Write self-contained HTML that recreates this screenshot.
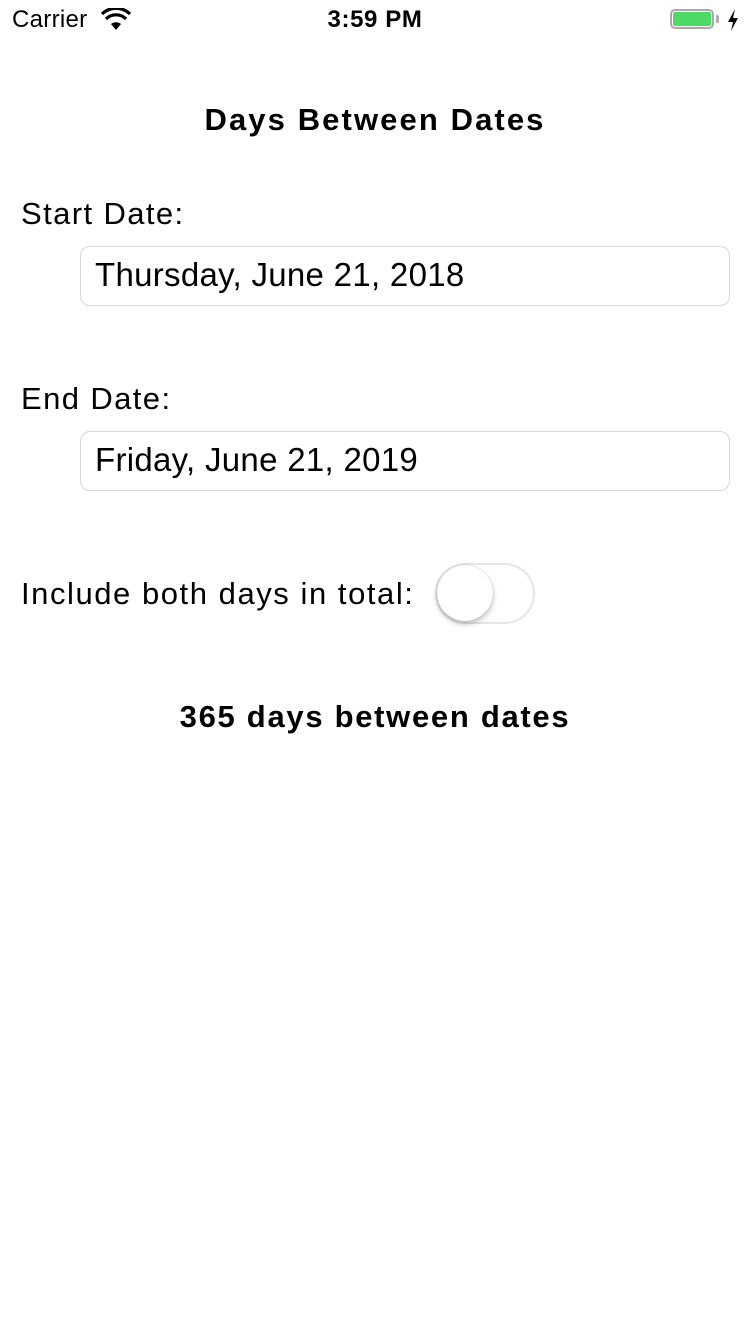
<!DOCTYPE html>
<html><head><meta charset="utf-8"><style>
body{margin:0;width:750px;height:1334px;background:#fff;font-family:"Liberation Sans",sans-serif;color:#000;position:relative;overflow:hidden}
.a{position:absolute;white-space:nowrap}
.box{position:absolute;left:80px;width:648px;height:58px;border:1px solid #d6d6d6;border-radius:10px}
.box span{position:absolute;left:14px;top:9px;font-size:33px;letter-spacing:0.3px}
</style></head><body>
<div class="a" style="left:12px;top:6px;font-size:24px;letter-spacing:0.3px">Carrier</div>
<svg class="a" style="left:101px;top:8px" width="30" height="24" viewBox="0 0 30 24"><path d="M15 22 L10 16 A8 8 0 0 1 20 16 Z" fill="#000"/><path d="M5 11 A14 14 0 0 1 25 11" stroke="#000" stroke-width="3.2" fill="none"/><path d="M1 6 A20 20 0 0 1 29 6" stroke="#000" stroke-width="3.2" fill="none"/></svg>
<div class="a" style="left:0;width:750px;text-align:center;top:6px;font-size:24px;font-weight:bold;letter-spacing:0.6px">3:59 PM</div>
<div class="a" style="left:670px;top:9px;width:44px;height:20px;border:2px solid #aaa;border-radius:5px;box-sizing:border-box"></div>
<div class="a" style="left:673px;top:12px;width:38px;height:14px;background:#4cd964;border-radius:2px"></div>
<div class="a" style="left:716px;top:15px;width:3px;height:8px;background:#aaa;border-radius:0 2px 2px 0"></div>
<svg class="a" style="left:727px;top:9px" width="12" height="22" viewBox="0 0 12 22"><path d="M8 0 L1 13 L6 13 L4 22 L11 9 L6 9 Z" fill="#000"/></svg>
<div class="a" style="left:0;width:750px;text-align:center;top:102px;font-size:31px;font-weight:bold;letter-spacing:2.1px">Days Between Dates</div>
<div class="a" style="left:21px;top:196px;font-size:31px;letter-spacing:1.4px">Start Date:</div>
<div class="box" style="top:246px"><span>Thursday, June 21, 2018</span></div>
<div class="a" style="left:21px;top:381px;font-size:31px;letter-spacing:1.4px">End Date:</div>
<div class="box" style="top:431px"><span>Friday, June 21, 2019</span></div>
<div class="a" style="left:21px;top:576px;font-size:31px;letter-spacing:1.55px">Include both days in total:</div>
<div class="a" style="left:435px;top:563px;width:100px;height:61px;border:2px solid #e6e6e6;border-radius:31px;box-sizing:border-box"></div>
<div class="a" style="left:437px;top:565px;width:56px;height:56px;border-radius:50%;background:#fff;box-shadow:0 3px 6px rgba(0,0,0,0.25),0 0 1px rgba(0,0,0,0.3)"></div>
<div class="a" style="left:0;width:750px;text-align:center;top:699px;font-size:31px;font-weight:bold;letter-spacing:1.7px">365 days between dates</div>
</body></html>
